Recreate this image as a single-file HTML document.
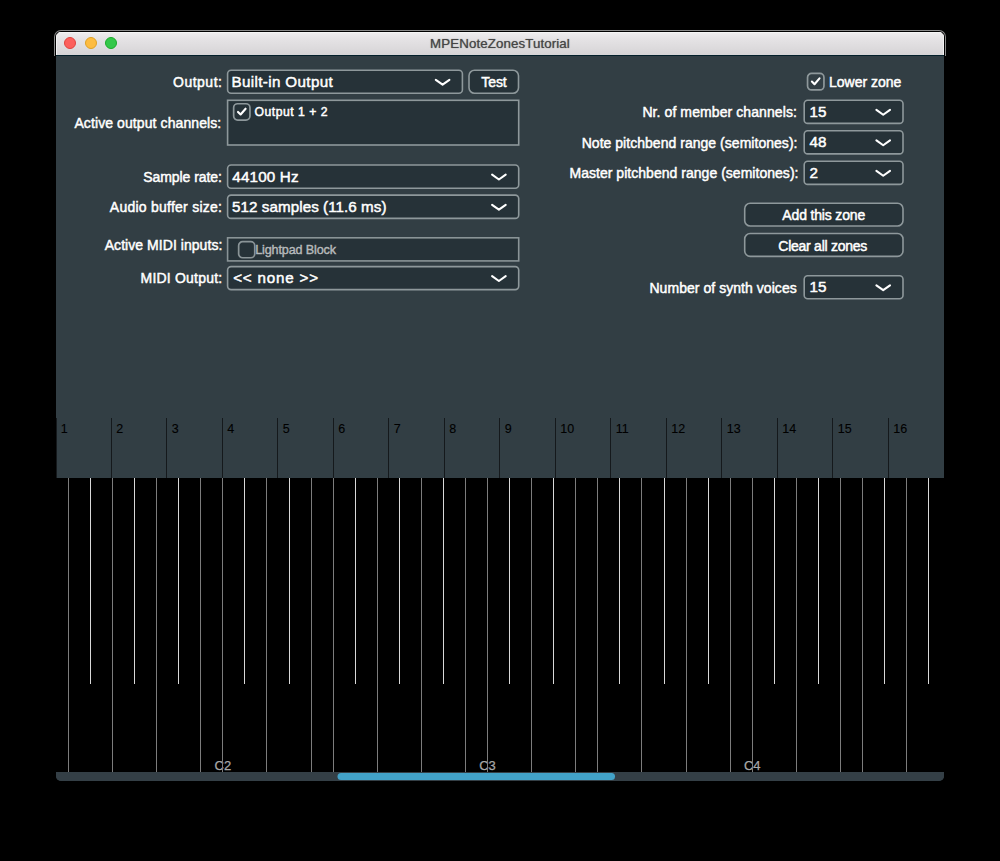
<!DOCTYPE html>
<html><head><meta charset="utf-8">
<style>
*{box-sizing:border-box}
html,body{margin:0;padding:0}
body{width:1000px;height:861px;background:#000;position:relative;overflow:hidden;font-family:"Liberation Sans",sans-serif}
.a{position:absolute}
.t{position:absolute;line-height:20px;white-space:nowrap;text-shadow:0 0 1px rgba(0,0,0,0.55)}
#win{position:absolute;left:0;top:0;width:1000px;height:861px;clip-path:inset(32px 56px 80px 56px round 5px)}
</style></head><body>
<div class="a" style="left:54px;top:30px;width:892px;height:26px;border-radius:7px 7px 0 0;border:1px solid #8a8a8a;border-bottom:0"></div>
<div id="win">
<div class="a" style="left:56px;top:32px;width:888px;height:23px;background:linear-gradient(#efeeef,#e5e3e5 30%,#d6d4d6)"></div>
<div class="a" style="left:56px;top:32px;width:888px;height:1px;background:#f6f6f6"></div>
<div class="a" style="left:56px;top:32px;width:1px;height:23px;background:#f2f2f2"></div>
<div class="a" style="left:943px;top:32px;width:1px;height:23px;background:#f2f2f2"></div>
<div class="a" style="left:56px;top:55px;width:888px;height:1px;background:#04202b"></div>
<div class="a" style="left:56px;top:56px;width:888px;height:725px;background:#323e44"></div>
<div class="a" style="left:64.40px;top:37.2px;width:12px;height:12px;border-radius:50%;background:#fc605c;border:0.5px solid #e0443e"></div>
<div class="a" style="left:84.80px;top:37.2px;width:12px;height:12px;border-radius:50%;background:#fdbc40;border:0.5px solid #dea123"></div>
<div class="a" style="left:104.80px;top:37.2px;width:12px;height:12px;border-radius:50%;background:#34c84a;border:0.5px solid #1aab29"></div>
<div class="t" style="left:350.00px;width:300.00px;text-align:center;top:33.79px;font-size:13.3px;color:#464646;letter-spacing:0.105px;">MPENoteZonesTutorial</div>
<div class="t" style="left:0;width:222.40px;text-align:right;top:72.15px;font-size:14px;color:#fff;-webkit-text-stroke:0.5px #fff;letter-spacing:0.483px;">Output:</div>
<div class="t" style="left:0;width:221.30px;text-align:right;top:112.95px;font-size:14px;color:#fff;-webkit-text-stroke:0.5px #fff;letter-spacing:0.091px;">Active output channels:</div>
<div class="t" style="left:0;width:221.90px;text-align:right;top:166.75px;font-size:14px;color:#fff;-webkit-text-stroke:0.5px #fff;letter-spacing:-0.055px;">Sample rate:</div>
<div class="t" style="left:0;width:222.15px;text-align:right;top:197.25px;font-size:14px;color:#fff;-webkit-text-stroke:0.5px #fff;letter-spacing:0.244px;">Audio buffer size:</div>
<div class="t" style="left:0;width:222.40px;text-align:right;top:235.25px;font-size:14px;color:#fff;-webkit-text-stroke:0.5px #fff;letter-spacing:0.050px;">Active MIDI inputs:</div>
<div class="t" style="left:0;width:222.45px;text-align:right;top:268.15px;font-size:14px;color:#fff;-webkit-text-stroke:0.5px #fff;letter-spacing:0.214px;">MIDI Output:</div>
<svg class="a" style="left:225px;top:68px" width="240" height="28"><rect x="2.60" y="2.30" width="234.80" height="22.90" rx="3.5" fill="#263238" stroke="#8e989b" stroke-width="1.6"/></svg>
<div class="t" style="left:231.50px;top:71.73px;font-size:15.2px;color:#fff;-webkit-text-stroke:0.5px #fff;letter-spacing:0.357px;">Built-in Output</div>
<svg class="a" style="left:225px;top:163px" width="296" height="28"><rect x="2.60" y="2.00" width="291.10" height="23.20" rx="3.5" fill="#263238" stroke="#8e989b" stroke-width="1.6"/></svg>
<div class="t" style="left:232.25px;top:166.53px;font-size:15.2px;color:#fff;-webkit-text-stroke:0.5px #fff;letter-spacing:0.193px;">44100 Hz</div>
<svg class="a" style="left:225px;top:193px" width="296" height="28"><rect x="2.60" y="2.10" width="291.10" height="23.30" rx="3.5" fill="#263238" stroke="#8e989b" stroke-width="1.6"/></svg>
<div class="t" style="left:232.05px;top:196.83px;font-size:15.2px;color:#fff;-webkit-text-stroke:0.5px #fff;letter-spacing:0.057px;">512 samples (11.6 ms)</div>
<svg class="a" style="left:225px;top:264px" width="296" height="28"><rect x="2.60" y="2.60" width="291.10" height="23.00" rx="3.5" fill="#263238" stroke="#8e989b" stroke-width="1.6"/></svg>
<div class="t" style="left:233.20px;top:267.73px;font-size:15.2px;color:#fff;-webkit-text-stroke:0.5px #fff;letter-spacing:0.800px;">&lt;&lt; none &gt;&gt;</div>
<svg class="a" style="left:802px;top:98px" width="103" height="28"><rect x="2.20" y="2.30" width="98.80" height="23.10" rx="3.5" fill="#263238" stroke="#8e989b" stroke-width="1.6"/></svg>
<div class="t" style="left:809.60px;top:101.73px;font-size:15.2px;color:#fff;-webkit-text-stroke:0.5px #fff;">15</div>
<svg class="a" style="left:802px;top:129px" width="103" height="27"><rect x="2.20" y="1.80" width="98.80" height="23.10" rx="3.5" fill="#263238" stroke="#8e989b" stroke-width="1.6"/></svg>
<div class="t" style="left:809.60px;top:132.23px;font-size:15.2px;color:#fff;-webkit-text-stroke:0.5px #fff;">48</div>
<svg class="a" style="left:802px;top:159px" width="103" height="28"><rect x="2.20" y="2.30" width="98.80" height="23.10" rx="3.5" fill="#263238" stroke="#8e989b" stroke-width="1.6"/></svg>
<div class="t" style="left:809.60px;top:162.93px;font-size:15.2px;color:#fff;-webkit-text-stroke:0.5px #fff;">2</div>
<svg class="a" style="left:802px;top:274px" width="103" height="27"><rect x="2.20" y="1.80" width="98.80" height="22.90" rx="3.5" fill="#263238" stroke="#8e989b" stroke-width="1.6"/></svg>
<div class="t" style="left:809.60px;top:277.13px;font-size:15.2px;color:#fff;-webkit-text-stroke:0.5px #fff;">15 </div>
<svg class="a" style="left:467px;top:68px" width="54" height="28"><rect x="2.00" y="2.30" width="49.50" height="22.90" rx="5.5" fill="#263238" stroke="#8e989b" stroke-width="1.6"/></svg>
<div class="t" style="left:463.95px;width:60.00px;text-align:center;top:72.15px;font-size:14px;color:#fff;-webkit-text-stroke:0.5px #fff;letter-spacing:-0.100px;">Test</div>
<svg class="a" style="left:225px;top:98px" width="296" height="49"><rect x="2.60" y="2.30" width="291.10" height="44.70" rx="0" fill="#263238" stroke="#8e989b" stroke-width="1.6"/></svg>
<svg class="a" style="left:231px;top:101px" width="21" height="21"><rect x="2.65" y="2.75" width="16.30" height="16.30" rx="4" fill="none" stroke="#8e989b" stroke-width="1.7"/></svg>
<div class="t" style="left:254.50px;top:101.97px;font-size:12.2px;color:#fff;-webkit-text-stroke:0.5px #fff;letter-spacing:0.500px;">Output 1 + 2</div>
<svg class="a" style="left:225px;top:236px" width="296" height="27"><rect x="2.60" y="1.80" width="291.10" height="23.10" rx="0" fill="#263238" stroke="#8a9497" stroke-width="1.6"/></svg>
<svg class="a" style="left:236px;top:239px" width="21" height="21"><rect x="2.65" y="2.65" width="16.10" height="16.10" rx="4" fill="none" stroke="#8a9497" stroke-width="1.7"/></svg>
<div class="t" style="left:255.20px;top:239.83px;font-size:12.6px;color:#b6babc;-webkit-text-stroke:0.45px #b6babc;letter-spacing:-0.138px;">Lightpad Block</div>
<svg class="a" style="left:805px;top:71px" width="21" height="21"><rect x="2.55" y="2.45" width="16.40" height="16.50" rx="4" fill="none" stroke="#8e989b" stroke-width="1.7"/></svg>
<div class="t" style="left:829.00px;top:71.95px;font-size:14px;color:#fff;-webkit-text-stroke:0.5px #fff;">Lower zone</div>
<div class="t" style="left:0;width:797.00px;text-align:right;top:102.15px;font-size:14px;color:#fff;-webkit-text-stroke:0.5px #fff;letter-spacing:0.091px;">Nr. of member channels:</div>
<div class="t" style="left:0;width:797.50px;text-align:right;top:132.65px;font-size:14px;color:#fff;-webkit-text-stroke:0.5px #fff;letter-spacing:0.031px;">Note pitchbend range (semitones):</div>
<div class="t" style="left:0;width:798.50px;text-align:right;top:163.35px;font-size:14px;color:#fff;-webkit-text-stroke:0.5px #fff;letter-spacing:0.029px;">Master pitchbend range (semitones):</div>
<div class="t" style="left:0;width:796.80px;text-align:right;top:277.55px;font-size:14px;color:#fff;-webkit-text-stroke:0.5px #fff;letter-spacing:0.048px;">Number of synth voices</div>
<svg class="a" style="left:742px;top:201px" width="163" height="27"><rect x="2.70" y="2.20" width="158.30" height="22.80" rx="5.5" fill="#263238" stroke="#8e989b" stroke-width="1.6"/></svg>
<div class="t" style="left:743.70px;width:160.00px;text-align:center;top:205.45px;font-size:14px;color:#fff;-webkit-text-stroke:0.5px #fff;letter-spacing:-0.167px;">Add this zone</div>
<svg class="a" style="left:742px;top:231px" width="163" height="28"><rect x="2.70" y="2.50" width="158.30" height="22.90" rx="5.5" fill="#263238" stroke="#8e989b" stroke-width="1.6"/></svg>
<div class="t" style="left:742.70px;width:160.00px;text-align:center;top:235.95px;font-size:14px;color:#fff;-webkit-text-stroke:0.5px #fff;letter-spacing:-0.257px;">Clear all zones</div>
<svg class="a" style="left:0;top:0" width="1000" height="861"><g fill="none" stroke="#fff" stroke-width="2.1" stroke-linecap="round" stroke-linejoin="round">
<path d="M435.80 79.85 L442.60 84.65 L449.40 79.85"/>
<path d="M492.10 174.70 L498.90 179.50 L505.70 174.70"/>
<path d="M492.10 204.85 L498.90 209.65 L505.70 204.85"/>
<path d="M492.10 276.20 L498.90 281.00 L505.70 276.20"/>
<path d="M876.40 109.95 L883.20 114.75 L890.00 109.95"/>
<path d="M876.40 140.45 L883.20 145.25 L890.00 140.45"/>
<path d="M876.40 170.95 L883.20 175.75 L890.00 170.95"/>
<path d="M876.40 285.35 L883.20 290.15 L890.00 285.35"/>
<path d="M238.00 111.90 L240.60 114.50 L245.60 108.70"/>
<path d="M811.90 81.60 L814.50 84.20 L819.50 78.40"/>
</g></svg>
<svg class="a" style="left:0;top:0" width="1000" height="861" shape-rendering="crispEdges">
<rect x="56" y="417.5" width="1" height="60.5" fill="#15191c"/>
<rect x="111" y="417.5" width="1" height="60.5" fill="#15191c"/>
<rect x="166" y="417.5" width="1" height="60.5" fill="#15191c"/>
<rect x="222" y="417.5" width="1" height="60.5" fill="#15191c"/>
<rect x="277" y="417.5" width="1" height="60.5" fill="#15191c"/>
<rect x="333" y="417.5" width="1" height="60.5" fill="#15191c"/>
<rect x="388" y="417.5" width="1" height="60.5" fill="#15191c"/>
<rect x="444" y="417.5" width="1" height="60.5" fill="#15191c"/>
<rect x="499" y="417.5" width="1" height="60.5" fill="#15191c"/>
<rect x="555" y="417.5" width="1" height="60.5" fill="#15191c"/>
<rect x="610" y="417.5" width="1" height="60.5" fill="#15191c"/>
<rect x="666" y="417.5" width="1" height="60.5" fill="#15191c"/>
<rect x="721" y="417.5" width="1" height="60.5" fill="#15191c"/>
<rect x="777" y="417.5" width="1" height="60.5" fill="#15191c"/>
<rect x="832" y="417.5" width="1" height="60.5" fill="#15191c"/>
<rect x="888" y="417.5" width="1" height="60.5" fill="#15191c"/>
</svg>
<svg class="a" style="left:0;top:0" width="1000" height="861">
<text x="60.80" y="432.7" font-family="Liberation Sans" font-size="12.5" fill="#000" stroke="#000" stroke-width="0.1">1</text>
<text x="116.30" y="432.7" font-family="Liberation Sans" font-size="12.5" fill="#000" stroke="#000" stroke-width="0.1">2</text>
<text x="171.80" y="432.7" font-family="Liberation Sans" font-size="12.5" fill="#000" stroke="#000" stroke-width="0.1">3</text>
<text x="227.30" y="432.7" font-family="Liberation Sans" font-size="12.5" fill="#000" stroke="#000" stroke-width="0.1">4</text>
<text x="282.80" y="432.7" font-family="Liberation Sans" font-size="12.5" fill="#000" stroke="#000" stroke-width="0.1">5</text>
<text x="338.30" y="432.7" font-family="Liberation Sans" font-size="12.5" fill="#000" stroke="#000" stroke-width="0.1">6</text>
<text x="393.80" y="432.7" font-family="Liberation Sans" font-size="12.5" fill="#000" stroke="#000" stroke-width="0.1">7</text>
<text x="449.30" y="432.7" font-family="Liberation Sans" font-size="12.5" fill="#000" stroke="#000" stroke-width="0.1">8</text>
<text x="504.80" y="432.7" font-family="Liberation Sans" font-size="12.5" fill="#000" stroke="#000" stroke-width="0.1">9</text>
<text x="560.30" y="432.7" font-family="Liberation Sans" font-size="12.5" fill="#000" stroke="#000" stroke-width="0.1">10</text>
<text x="615.80" y="432.7" font-family="Liberation Sans" font-size="12.5" fill="#000" stroke="#000" stroke-width="0.1">11</text>
<text x="671.30" y="432.7" font-family="Liberation Sans" font-size="12.5" fill="#000" stroke="#000" stroke-width="0.1">12</text>
<text x="726.80" y="432.7" font-family="Liberation Sans" font-size="12.5" fill="#000" stroke="#000" stroke-width="0.1">13</text>
<text x="782.30" y="432.7" font-family="Liberation Sans" font-size="12.5" fill="#000" stroke="#000" stroke-width="0.1">14</text>
<text x="837.80" y="432.7" font-family="Liberation Sans" font-size="12.5" fill="#000" stroke="#000" stroke-width="0.1">15</text>
<text x="893.30" y="432.7" font-family="Liberation Sans" font-size="12.5" fill="#000" stroke="#000" stroke-width="0.1">16</text>
<rect x="56" y="478" width="888" height="294" fill="#000"/>
<text x="222.82" y="769.6" text-anchor="middle" font-family="Liberation Sans" font-size="13" fill="#a8a8a8" stroke="#a8a8a8" stroke-width="0.25">C2</text>
<text x="487.54" y="769.6" text-anchor="middle" font-family="Liberation Sans" font-size="13" fill="#a8a8a8" stroke="#a8a8a8" stroke-width="0.25">C3</text>
<text x="752.26" y="769.6" text-anchor="middle" font-family="Liberation Sans" font-size="13" fill="#a8a8a8" stroke="#a8a8a8" stroke-width="0.25">C4</text>
<rect x="68" y="478" width="1" height="294" fill="#7c7c7c" shape-rendering="crispEdges"/>
<rect x="90" y="478" width="1" height="206" fill="#d8d8d8" shape-rendering="crispEdges"/>
<rect x="112" y="478" width="1" height="294" fill="#7c7c7c" shape-rendering="crispEdges"/>
<rect x="134" y="478" width="1" height="206" fill="#d8d8d8" shape-rendering="crispEdges"/>
<rect x="156" y="478" width="1" height="294" fill="#7c7c7c" shape-rendering="crispEdges"/>
<rect x="178" y="478" width="1" height="206" fill="#d8d8d8" shape-rendering="crispEdges"/>
<rect x="200" y="478" width="1" height="294" fill="#7c7c7c" shape-rendering="crispEdges"/>
<rect x="222" y="478" width="1" height="294" fill="#7c7c7c" shape-rendering="crispEdges"/>
<rect x="244" y="478" width="1" height="206" fill="#d8d8d8" shape-rendering="crispEdges"/>
<rect x="266" y="478" width="1" height="294" fill="#7c7c7c" shape-rendering="crispEdges"/>
<rect x="289" y="478" width="1" height="206" fill="#d8d8d8" shape-rendering="crispEdges"/>
<rect x="311" y="478" width="1" height="294" fill="#7c7c7c" shape-rendering="crispEdges"/>
<rect x="333" y="478" width="1" height="294" fill="#7c7c7c" shape-rendering="crispEdges"/>
<rect x="355" y="478" width="1" height="206" fill="#d8d8d8" shape-rendering="crispEdges"/>
<rect x="377" y="478" width="1" height="294" fill="#7c7c7c" shape-rendering="crispEdges"/>
<rect x="399" y="478" width="1" height="206" fill="#d8d8d8" shape-rendering="crispEdges"/>
<rect x="421" y="478" width="1" height="294" fill="#7c7c7c" shape-rendering="crispEdges"/>
<rect x="443" y="478" width="1" height="206" fill="#d8d8d8" shape-rendering="crispEdges"/>
<rect x="465" y="478" width="1" height="294" fill="#7c7c7c" shape-rendering="crispEdges"/>
<rect x="487" y="478" width="1" height="294" fill="#7c7c7c" shape-rendering="crispEdges"/>
<rect x="509" y="478" width="1" height="206" fill="#d8d8d8" shape-rendering="crispEdges"/>
<rect x="531" y="478" width="1" height="294" fill="#7c7c7c" shape-rendering="crispEdges"/>
<rect x="553" y="478" width="1" height="206" fill="#d8d8d8" shape-rendering="crispEdges"/>
<rect x="575" y="478" width="1" height="294" fill="#7c7c7c" shape-rendering="crispEdges"/>
<rect x="597" y="478" width="1" height="294" fill="#7c7c7c" shape-rendering="crispEdges"/>
<rect x="619" y="478" width="1" height="206" fill="#d8d8d8" shape-rendering="crispEdges"/>
<rect x="641" y="478" width="1" height="294" fill="#7c7c7c" shape-rendering="crispEdges"/>
<rect x="664" y="478" width="1" height="206" fill="#d8d8d8" shape-rendering="crispEdges"/>
<rect x="686" y="478" width="1" height="294" fill="#7c7c7c" shape-rendering="crispEdges"/>
<rect x="708" y="478" width="1" height="206" fill="#d8d8d8" shape-rendering="crispEdges"/>
<rect x="730" y="478" width="1" height="294" fill="#7c7c7c" shape-rendering="crispEdges"/>
<rect x="752" y="478" width="1" height="294" fill="#7c7c7c" shape-rendering="crispEdges"/>
<rect x="774" y="478" width="1" height="206" fill="#d8d8d8" shape-rendering="crispEdges"/>
<rect x="796" y="478" width="1" height="294" fill="#7c7c7c" shape-rendering="crispEdges"/>
<rect x="818" y="478" width="1" height="206" fill="#d8d8d8" shape-rendering="crispEdges"/>
<rect x="840" y="478" width="1" height="294" fill="#7c7c7c" shape-rendering="crispEdges"/>
<rect x="862" y="478" width="1" height="294" fill="#7c7c7c" shape-rendering="crispEdges"/>
<rect x="884" y="478" width="1" height="206" fill="#d8d8d8" shape-rendering="crispEdges"/>
<rect x="906" y="478" width="1" height="294" fill="#7c7c7c" shape-rendering="crispEdges"/>
<rect x="928" y="478" width="1" height="206" fill="#d8d8d8" shape-rendering="crispEdges"/>
<rect x="56" y="772" width="888" height="9" fill="#343f46"/>
<rect x="337.5" y="773" width="277.5" height="7" rx="3.5" fill="#42a2c8"/>
</svg>
</div>
</body></html>
